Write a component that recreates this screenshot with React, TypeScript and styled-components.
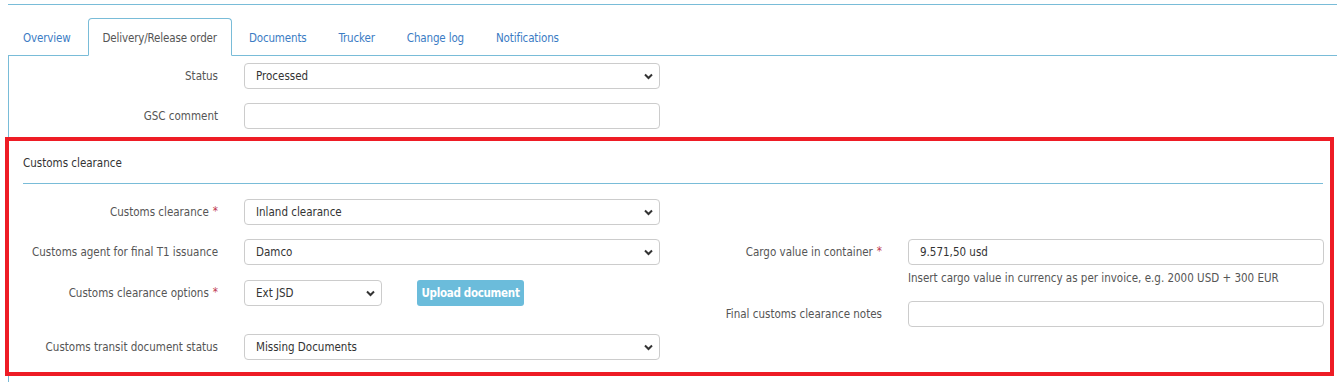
import React from 'react';
import styled, { createGlobalStyle } from 'styled-components';

const GlobalStyle = createGlobalStyle`
  html, body {
    margin: 0;
    padding: 0;
    background: #fff;
    overflow: hidden;
  }
  body {
    font-family: "DejaVu Sans Condensed", "Liberation Sans", sans-serif;
    font-size: 11.5px;
    color: #555;
  }
`;

const Page = styled.div`
  padding: 4px 0 0 8px;
  width: 1329px;
  height: 378px;
`;

const TopRule = styled.div`
  border-top: 1px solid #79bcd8;
  height: 13px;
`;

const Tabs = styled.ul`
  display: flex;
  list-style: none;
  margin: 0;
  padding: 0;
  border-bottom: 1px solid #79bcd8;
`;

const Tab = styled.li<{ $active?: boolean }>`
  margin-right: 2px;
  margin-bottom: -1px;
  padding: 12px 14px 9px;
  line-height: 15px;
  letter-spacing: -0.15px;
  border: 1px solid ${p => (p.$active ? '#79bcd8' : 'transparent')};
  border-bottom-color: ${p => (p.$active ? '#fff' : 'transparent')};
  border-radius: 4px 4px 0 0;
  background: ${p => (p.$active ? '#fff' : 'transparent')};
  color: ${p => (p.$active ? '#555' : '#3b7cc4')};
  cursor: pointer;
`;

const Panel = styled.div`
  border-left: 1px solid #79bcd8;
  height: 330px;
`;

const Fields = styled.div`
  display: flex;
  flex-direction: column;
  gap: 14px;
  padding: 7px 0 0 14px;
`;

const Row = styled.div<{ $after?: number }>`
  display: grid;
  grid-template-columns: 195px auto;
  column-gap: 26px;
  align-items: center;
  margin-bottom: ${p => p.$after || 0}px;
`;

const Label = styled.label`
  text-align: right;
  color: #555;
  line-height: 15px;
`;

const Req = styled.span`
  color: #c0394e;
  margin-left: 4px;
  position: relative;
  top: -1px;
`;

const Control = styled.div`
  display: flex;
  align-items: center;
  gap: 35px;
`;

const Box = styled.div<{ $w?: number }>`
  position: relative;
  box-sizing: border-box;
  width: ${p => p.$w || 416}px;
  height: 26px;
  border: 1px solid #ccc;
  border-radius: 4px;
  background: #fff;
  display: flex;
  align-items: center;
  padding-left: 11px;
  color: #333;
  line-height: 15px;
`;

const Chevron = styled.svg`
  position: absolute;
  right: 6px;
  top: 9px;
`;

const Button = styled.button`
  width: 107px;
  height: 26px;
  padding: 0;
  border: none;
  border-radius: 3px;
  background: #6bbcdb;
  color: #fff;
  font-family: inherit;
  font-size: 11.5px;
  font-weight: bold;
  letter-spacing: -0.3px;
`;

const Section = styled.section`
  margin: 8px 0 0 -4px;
  box-sizing: border-box;
  width: 1329px;
  border: 4px solid #ee1c25;
  padding: 15px 7px 12px 14px;
`;

const Heading = styled.div`
  color: #333;
  line-height: 15px;
  padding-bottom: 12px;
  border-bottom: 1px solid #79bcd8;
`;

const Columns = styled.div`
  display: flex;
  gap: 27px;
  padding-top: 15px;
`;

const Column = styled.div<{ $offset?: number }>`
  display: flex;
  flex-direction: column;
  gap: 14px;
  padding-top: ${p => p.$offset || 0}px;
`;

const Help = styled.div`
  margin: -8px 0 1px 221px;
  line-height: 15px;
  color: #555;
`;

const Select = ({ value, w }: { value: string; w?: number }) => (
  <Box $w={w}>
    {value}
    <Chevron width="9" height="7" viewBox="0 0 9 7">
      <path d="M1 1.5 L4.5 5 L8 1.5" fill="none" stroke="#333" strokeWidth="2" />
    </Chevron>
  </Box>
);

const Field = ({
  label,
  req,
  children,
  after,
}: {
  label: string;
  req?: boolean;
  children: React.ReactNode;
  after?: number;
}) => (
  <Row $after={after}>
    <Label>
      {label}
      {req && <Req>*</Req>}
    </Label>
    <Control>{children}</Control>
  </Row>
);

const tabs = ['Overview', 'Delivery/Release order', 'Documents', 'Trucker', 'Change log', 'Notifications'];

export default function App() {
  return (
    <Page>
      <GlobalStyle />
      <TopRule />
      <Tabs>
        {tabs.map(t => (
          <Tab key={t} $active={t === 'Delivery/Release order'}>
            {t}
          </Tab>
        ))}
      </Tabs>
      <Panel>
        <Fields>
          <Field label="Status">
            <Select value="Processed" />
          </Field>
          <Field label="GSC comment">
            <Box />
          </Field>
        </Fields>
        <Section>
          <Heading>Customs clearance</Heading>
          <Columns>
            <Column>
              <Field label="Customs clearance" req>
                <Select value="Inland clearance" />
              </Field>
              <Field label="Customs agent for final T1 issuance" after={1}>
                <Select value="Damco" />
              </Field>
              <Field label="Customs clearance options" req after={14}>
                <Select value="Ext JSD" w={138} />
                <Button>Upload document</Button>
              </Field>
              <Field label="Customs transit document status">
                <Select value="Missing Documents" />
              </Field>
            </Column>
            <Column $offset={40}>
              <Field label="Cargo value in container" req>
                <Box>9.571,50 usd</Box>
              </Field>
              <Help>Insert cargo value in currency as per invoice, e.g. 2000 USD + 300 EUR</Help>
              <Field label="Final customs clearance notes">
                <Box />
              </Field>
            </Column>
          </Columns>
        </Section>
      </Panel>
    </Page>
  );
}
